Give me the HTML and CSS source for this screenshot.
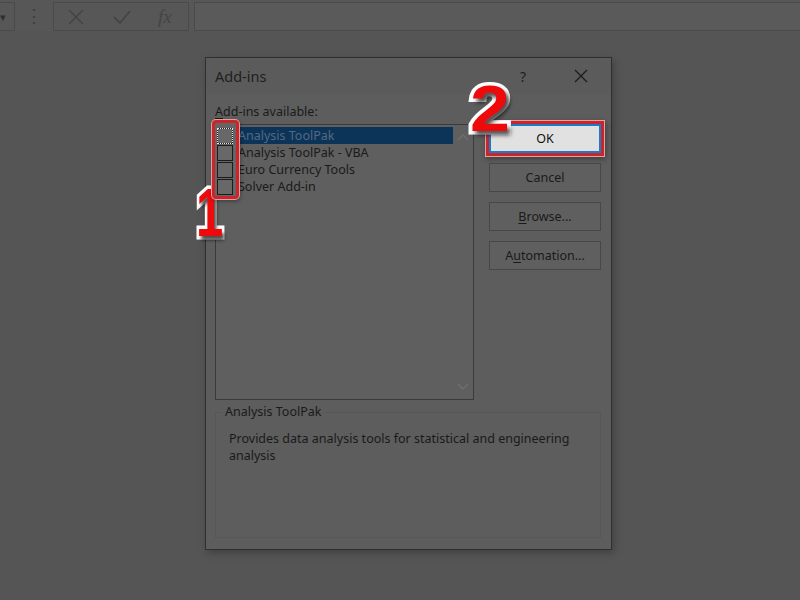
FILE: index.html
```html
<!DOCTYPE html>
<html>
<head>
<meta charset="utf-8">
<link rel="stylesheet" href="styles.css">
</head>
<body>
<div class="topbar">
  <div class="namebox"><span class="arrow">&#9662;</span></div>
  <div class="dots">&#8942;</div>
  <div class="fxbox">
    <svg class="ico" width="20" height="20" viewBox="0 0 20 20"><path d="M3 3 L17 17 M17 3 L3 17" stroke="#444" stroke-width="1.6" fill="none"/></svg>
    <svg class="ico" width="20" height="20" viewBox="0 0 20 20"><path d="M2 10 L8 16 L18 4" stroke="#444" stroke-width="1.8" fill="none"/></svg>
    <span class="fx">fx</span>
  </div>
  <div class="formula"></div>
</div>

<div class="dialog">
  <div class="titlebar">
    <span class="title">Add-ins</span>
    <span class="help">?</span>
    <svg class="close" width="16" height="16" viewBox="0 0 16 16"><path d="M2 2 L14 14 M14 2 L2 14" stroke="#1c1c1c" stroke-width="1.3" fill="none"/></svg>
  </div>
  <div class="body">
    <div class="main">
      <div class="leftcol">
        <div class="label"><u>A</u>dd-ins available:</div>
        <div class="listbox">
          <div class="items">
            <div class="row"><span class="cb focus"></span><span class="txt sel">Analysis ToolPak</span></div>
            <div class="row"><span class="cb"></span><span class="txt">Analysis ToolPak - VBA</span></div>
            <div class="row"><span class="cb"></span><span class="txt">Euro Currency Tools</span></div>
            <div class="row"><span class="cb"></span><span class="txt">Solver Add-in</span></div>
          </div>
          <div class="scroll">
            <svg width="12" height="8" viewBox="0 0 12 8"><path d="M1 7 L6 2 L11 7" stroke="#6f6f6f" stroke-width="1.3" fill="none"/></svg>
            <svg width="12" height="8" viewBox="0 0 12 8"><path d="M1 1 L6 6 L11 1" stroke="#6f6f6f" stroke-width="1.3" fill="none"/></svg>
          </div>
          <div class="cbmark"></div>
        </div>
      </div>
      <div class="buttons">
        <div class="btn ok">OK</div>
        <div class="btn">Cancel</div>
        <div class="btn"><u>B</u>rowse...</div>
        <div class="btn">A<u>u</u>tomation...</div>
      </div>
    </div>
    <div class="group">
      <div class="legend">Analysis ToolPak</div>
      <div class="desc">Provides data analysis tools for statistical and engineering analysis</div>
    </div>
  </div>
</div>

<div class="num one">1</div>
<div class="num two">2</div>
</body>
</html>
```

FILE: styles.css
```css
html, body {
  margin: 0;
  padding: 0;
}
body {
  width: 800px;
  height: 600px;
  overflow: hidden;
  background: #555555;
  font-family: "Noto Sans", "Open Sans", sans-serif;
  color: #1a1a1a;
  position: relative;
}
.topbar {
  height: 31px;
  background: #575757;
  display: flex;
  align-items: stretch;
  box-sizing: border-box;
  padding-top: 2px;
}
.namebox {
  width: 15px;
  border: 1px solid #4a4a4a;
  border-left: none;
  box-sizing: border-box;
  display: flex;
  align-items: center;
  justify-content: flex-start;
}
.arrow {
  font-size: 11px;
  color: #2e2e2e;
}
.dots {
  width: 38px;
  text-align: center;
  color: #3e3e3e;
  font-size: 18px;
  line-height: 27px;
}
.fxbox {
  width: 136px;
  border: 1px solid #4a4a4a;
  box-sizing: border-box;
  display: flex;
  align-items: center;
  gap: 26px;
  padding-left: 12px;
}
.ico { display: block; }
.fx {
  font-family: "Liberation Serif", serif;
  font-style: italic;
  font-size: 19px;
  color: #444;
}
.formula {
  flex: 1;
  margin-left: 5px;
  border: 1px solid #4a4a4a;
  border-right: none;
  box-sizing: border-box;
  background: #5a5a5a;
}

.dialog {
  margin: 26px 0 0 205px;
  width: 407px;
  height: 493px;
  box-sizing: border-box;
  border: 1px solid #2f2f2f;
  background: #5d5d5d;
  box-shadow: 2px 3px 8px rgba(0,0,0,0.25);
  display: flex;
  flex-direction: column;
}
.titlebar {
  height: 36px;
  display: flex;
  align-items: center;
  padding-left: 9px;
  background: #5b5b5b;
}
.title {
  font-size: 14.5px;
  flex: 1;
  color: #1f1f1f;
}
.help {
  font-size: 14px;
  width: 20px;
  text-align: center;
  margin-right: 40px;
  color: #1f1f1f;
}
.close {
  margin-right: 22px;
}
.body {
  padding: 8px 9px 0 9px;
  display: flex;
  flex-direction: column;
  gap: 12px;
}
.main {
  display: flex;
  gap: 15px;
}
.leftcol {
  width: 259px;
}
.label {
  font-size: 12.5px;
  height: 22px;
  line-height: 20px;
}
.label u, .btn u { text-decoration-thickness: 1px; text-underline-offset: 2px; }
.listbox {
  height: 276px;
  border: 1px solid #3a3a3a;
  background: #5f5f5f;
  box-sizing: border-box;
  display: flex;
  position: relative;
}
.items {
  flex: 1;
  padding-top: 2px;
  padding-left: 1px;
}
.row {
  height: 17px;
  display: flex;
  align-items: center;
}
.cb {
  width: 16px;
  height: 16px;
  border: 1px solid #1c1c1c;
  background: #686868;
  box-sizing: border-box;
  margin-right: 4px;
  position: relative;
  z-index: 2;
}
.cb.focus::after {
  content: "";
  position: absolute;
  inset: -1px;
  border: 1px dotted #e8e8e8;
}
.txt {
  font-size: 12.5px;
  line-height: 17px;
  height: 17px;
  padding-left: 1px;
  flex: 1;
  white-space: nowrap;
}
.txt.sel {
  background: #0c3459;
  color: #55697f;
}
.scroll {
  width: 20px;
  display: flex;
  flex-direction: column;
  justify-content: space-between;
  align-items: center;
  padding: 8px 0 8px;
  box-sizing: border-box;
}
.scroll svg { display: block; }
.cbmark {
  position: absolute;
  left: -4px;
  top: -5px;
  width: 27px;
  height: 79px;
  box-sizing: border-box;
  border: 3px solid #c9262b;
  border-radius: 4px;
  background: #656565;
  box-shadow: 0 0 0 1px #e0a0a0, 1px 2px 4px rgba(0,0,0,0.4);
  z-index: 1;
}
.buttons {
  display: flex;
  flex-direction: column;
  gap: 10px;
  padding-top: 22px;
}
.btn {
  width: 112px;
  height: 29px;
  box-sizing: border-box;
  border: 1px solid #474747;
  background: #5f5f5f;
  font-size: 12.5px;
  display: flex;
  align-items: center;
  justify-content: center;
}
.btn.ok {
  background: #e1e1e1;
  border: 2px solid #1a7bc8;
  color: #111;
  box-shadow: 0 0 0 3px #c9262b, 0 0 0 4px #e6a0a0, 1px 2px 5px 4px rgba(0,0,0,0.35);
}
.group {
  width: 386px;
  height: 126px;
  box-sizing: border-box;
  border: 1px solid #575757;
  position: relative;
  padding: 17px 13px 0 13px;
}
.legend {
  position: absolute;
  top: -10px;
  left: 6px;
  padding: 0 3px;
  background: #5d5d5d;
  font-size: 12.5px;
}
.desc {
  font-size: 12.5px;
  line-height: 17px;
}

.num {
  position: absolute;
  font-family: "Liberation Sans", sans-serif;
  font-weight: bold;
  color: #ee0a0a;
  -webkit-text-stroke: 7px #ffffff;
  paint-order: stroke fill;
  text-shadow: 3px 4px 4px rgba(0,0,0,0.7);
  line-height: 1;
  transform-origin: 0 0;
}
.one {
  left: 196px;
  top: 178px;
  font-size: 68px;
  transform: scaleX(0.72);
}
.two {
  left: 470px;
  top: 77px;
  font-size: 64px;
  transform: scaleX(1.12);
}
```
